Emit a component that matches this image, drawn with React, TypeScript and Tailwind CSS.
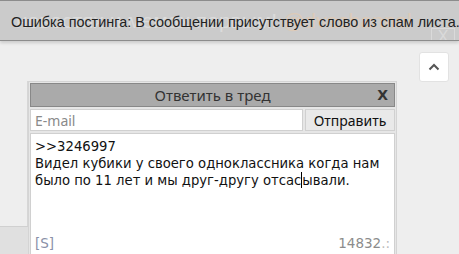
import React from "react";

export default function App() {
  return (
    <div className="relative w-[459px] h-[254px] overflow-hidden bg-[#eeeeee] flex flex-col" style={{ fontFamily: '"DejaVu Sans", sans-serif' }}>
      {/* error banner */}
      <div className="relative h-[41px] shrink-0 bg-[#cbcbcb] border-t border-b border-[#8c8c8c] shadow-[0_2px_3px_rgba(0,0,0,0.15)] overflow-hidden flex items-center pl-[11px] pt-[4px]" style={{ fontFamily: '"Liberation Sans", Arial, sans-serif' }}>
        <div className="absolute left-[16px] top-[9px] text-[21px] leading-none text-[#dbdbdb] whitespace-nowrap">
          новостях и мемах первым! <span className="text-[#dccab8]">@dvachannel</span>
        </div>
        <div className="absolute left-[431px] top-[27px] w-[24px] h-[16px] border border-[#dadada] text-[#dadada] text-[16px] leading-none text-center">X</div>
        <div className="relative text-[14.4px] leading-[17px] text-[#222] whitespace-nowrap">
          Ошибка постинга: В сообщении присутствует слово из спам листа.
        </div>
      </div>

      {/* scroll-up button (floating) */}
      <div className="absolute left-[419px] top-[52px] w-[30px] h-[30px] bg-white rounded-[3px] border border-[#e2e2e2] flex items-center justify-center">
        <svg width="12" height="8" viewBox="0 0 12 8" fill="none">
          <path d="M1.5 6.5 L6 2 L10.5 6.5" stroke="#555" strokeWidth="2" />
        </svg>
      </div>

      {/* page body */}
      <div className="relative flex-1 flex pt-[40px]">
        <div className="absolute left-0 top-[185px] w-[28px] h-[40px] bg-[#e0e0e0] border-t border-[#d0d0d0]" />
        <div className="w-[28px] shrink-0 border-r border-[#d6d6d6]" />

        {/* reply form */}
        <div className="w-[369px] h-[180px] shrink-0 border border-[#d4d4d4] bg-[#e6e6e6] p-[1px] flex flex-col gap-[2px]">
          <div className="relative h-[24px] bg-[#aaaaaa] border border-[#888888] flex items-center justify-center text-[15px] text-[#333]" style={{ fontFamily: '"Noto Sans", "DejaVu Sans", sans-serif' }}>
            Ответить в тред
            <span className="absolute right-[6px] top-[1px] text-[14px] font-bold text-[#333]" style={{ fontFamily: '"DejaVu Sans", sans-serif' }}>X</span>
          </div>
          <div className="flex gap-[2px] h-[22px]">
            <div className="flex-1 bg-white border border-[#d0d0d0] flex items-center pl-[4px] text-[14px] text-[#8a8a8a]" style={{ fontFamily: '"Noto Sans", "DejaVu Sans", sans-serif' }}>
              E-mail
            </div>
            <div className="w-[90px] bg-[#e9e9e9] border border-[#d0d0d0] flex items-center justify-center text-[14px] text-[#111]" style={{ fontFamily: '"Noto Sans", "DejaVu Sans", sans-serif' }}>
              Отправить
            </div>
          </div>
          <div className="flex-1 bg-white border border-[#d0d0d0] px-[4px] pt-[4px] pb-[6px] flex flex-col justify-between text-[13.2px] leading-[17px] text-[#111]">
            <div>
              <div>&gt;&gt;3246997</div>
              <div>Видел кубики у своего одноклассника когда нам</div>
              <div>было по 11 лет и мы друг-другу отсас<span className="inline-block w-[1px] h-[16px] bg-black align-[-3px]" />ывали.</div>
            </div>
            <div className="flex justify-between text-[13.5px]">
              <span className="text-[#8a90a8]">[S]</span>
              <span className="text-[#8c8c8c]">14832<span className="text-[#bbb]">.:</span></span>
            </div>
          </div>
        </div>
      </div>
    </div>
  );
}
